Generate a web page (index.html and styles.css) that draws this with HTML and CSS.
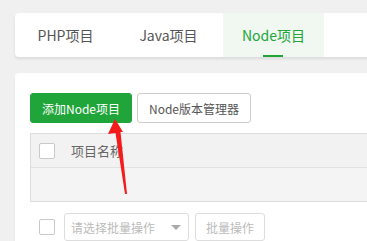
FILE: index.html
```html
<!DOCTYPE html>
<html lang="zh">
<head>
<meta charset="utf-8">
<link rel="stylesheet" href="styles.css">
</head>
<body>
<div class="page">
  <div class="tabs">
    <div class="tab">PHP项目</div>
    <div class="tab">Java项目</div>
    <div class="tab active">Node项目</div>
  </div>
  <div class="panel">
    <div class="toolbar">
      <button class="btn btn-green">添加Node项目</button>
      <button class="btn btn-default">Node版本管理器</button>
    </div>
    <div class="table">
      <div class="thead">
        <span class="check"></span>
        <span class="th">项目名称</span>
      </div>
      <div class="trow"></div>
    </div>
    <div class="batch">
      <span class="check"></span>
      <div class="select">
        <span class="placeholder">请选择批量操作</span>
        <span class="caret"></span>
      </div>
      <button class="btn btn-disabled">批量操作</button>
    </div>
  </div>
</div>
<svg class="arrow" width="367" height="241" viewBox="0 0 367 241">
  <polygon points="115,119 123,132 120.5,132 127,194 125,194 115.5,133 108,134" fill="#f51b1b"/>
</svg>
</body>
</html>
```

FILE: styles.css
```css
html, body {
  margin: 0;
  padding: 0;
}
body {
  background: #f0f0f0;
  width: 367px;
  height: 241px;
  overflow: hidden;
  position: relative;
  font-family: "Noto Sans CJK SC", "Noto Sans", sans-serif;
}
.page {
  width: 440px;
  padding: 13px 0 0 15px;
}
.tabs {
  display: flex;
  gap: 2px;
  height: 44px;
  background: #fff;
  border-radius: 4px;
  box-shadow: 0 2px 3px rgba(0, 0, 0, 0.09);
  overflow: hidden;
}
.tab {
  width: 101px;
  display: flex;
  align-items: center;
  justify-content: center;
  font-size: 14px;
  color: #555;
  position: relative;
}
.tab.active {
  background: #f1f7f1;
  color: #20a53a;
  margin-left: 2px;
}
.tab.active::after {
  content: "";
  position: absolute;
  left: 40px;
  bottom: 0;
  width: 20px;
  height: 2px;
  background: #20a53a;
}
.panel {
  margin-top: 16px;
  background: #fff;
  border-radius: 4px;
  padding: 20px 15px 20px 15px;
  box-shadow: 0 2px 3px rgba(0, 0, 0, 0.06);
}
.toolbar {
  display: flex;
  gap: 5px;
}
.btn {
  height: 30px;
  border-radius: 3px;
  font-family: inherit;
  font-size: 12px;
  padding: 0;
  cursor: pointer;
}
.btn-green {
  width: 102px;
  background: #20a53a;
  border: 1px solid #20a53a;
  color: #fff;
}
.btn-default {
  width: 114px;
  background: #fff;
  border: 1px solid #ccc;
  color: #555;
}
.table {
  margin-top: 10px;
  border: 1px solid #ddd;
  border-right: none;
  background: #f3f3f3;
}
.thead {
  height: 33px;
  display: flex;
  align-items: center;
  padding-left: 8px;
  border-bottom: 1px solid #e2e2e2;
  background: #f2f2f2;
}
.check {
  display: inline-block;
  box-sizing: border-box;
  width: 16px;
  height: 16px;
  border: 1px solid #c9c9c9;
  border-radius: 2px;
  background: #fff;
}
.th {
  margin-left: 16px;
  font-size: 13px;
  color: #666;
}
.trow {
  height: 33px;
  background: #f4f4f4;
}
.batch {
  margin-top: 11px;
  display: flex;
  align-items: center;
  padding-left: 9px;
  gap: 0;
}
.select {
  margin-left: 9px;
  box-sizing: border-box;
  width: 125px;
  height: 28px;
  border: 1px solid #ddd;
  border-radius: 3px;
  display: flex;
  align-items: center;
  justify-content: space-between;
  padding: 0 7px 0 6px;
  background: #fff;
}
.placeholder {
  font-size: 12px;
  color: #bbb;
}
.caret {
  width: 0;
  height: 0;
  border-left: 5px solid transparent;
  border-right: 5px solid transparent;
  border-top: 5px solid #aaa;
}
.btn-disabled {
  margin-left: 6px;
  width: 70px;
  height: 28px;
  background: #fff;
  border: 1px solid #ddd;
  color: #bbb;
}
.arrow {
  position: absolute;
  left: 0;
  top: 0;
  pointer-events: none;
}
```
